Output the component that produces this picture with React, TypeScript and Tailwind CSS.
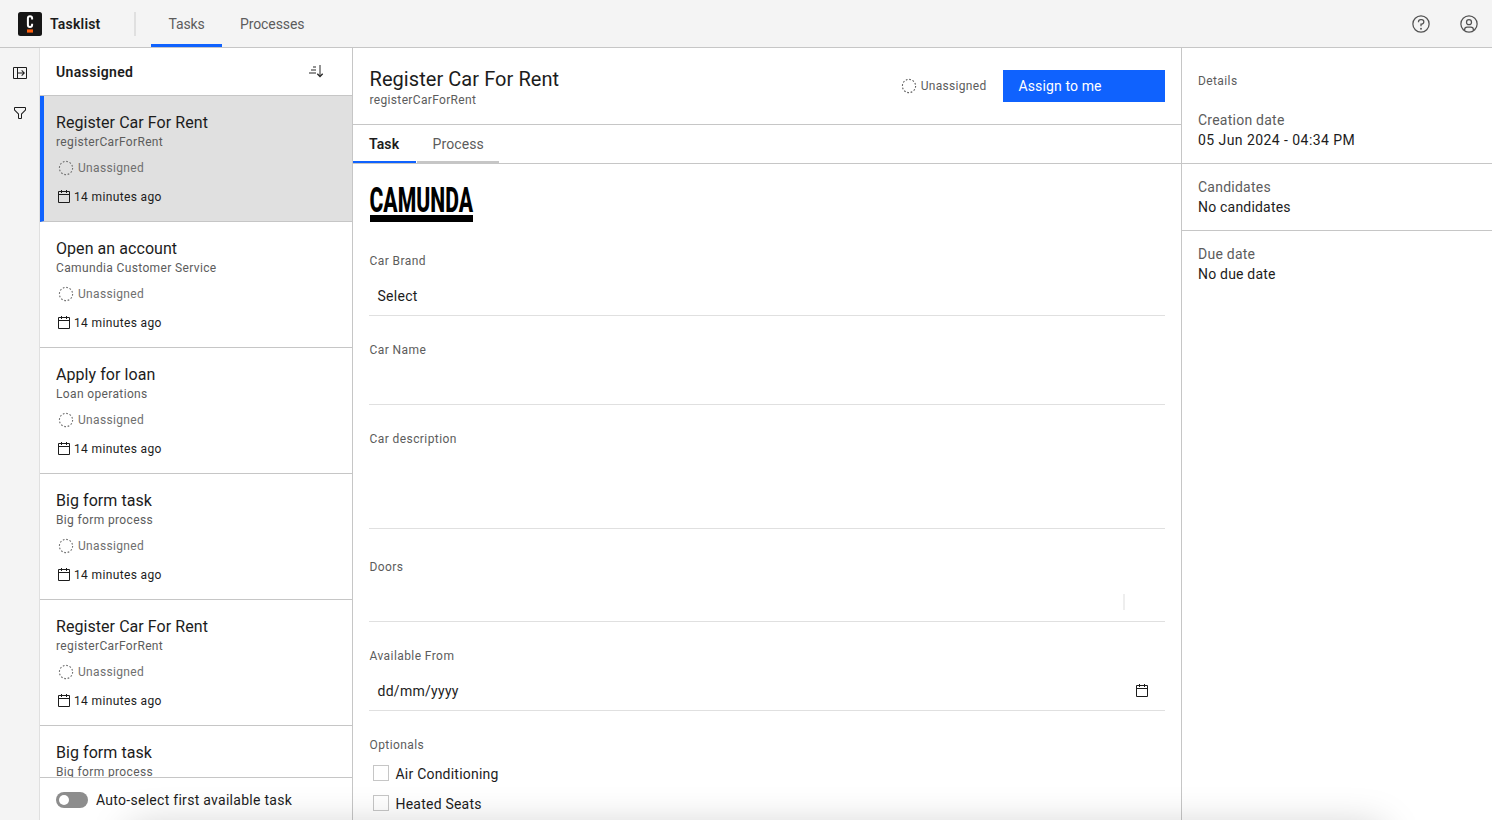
import React from "react";

const CALENDAR =
  "M26,4H22V2H20V4H12V2H10V4H6A2,2,0,0,0,4,6V26a2,2,0,0,0,2,2H26a2,2,0,0,0,2-2V6A2,2,0,0,0,26,4Zm0,22H6V12H26Zm0-16H6V6h4V8h2V6h8V8h2V6h4Z";
const FILTER =
  "M18,28H14a2,2,0,0,1-2-2V18.41L4.59,11A2,2,0,0,1,4,9.59V6A2,2,0,0,1,6,4H26a2,2,0,0,1,2,2V9.59A2,2,0,0,1,27.41,11L20,18.41V26A2,2,0,0,1,18,28ZM6,6V9.59l8,8V26h4V17.59l8-8V6Z";
const PANEL =
  "M28,4H4A2,2,0,0,0,2,6V26a2,2,0,0,0,2,2H28a2,2,0,0,0,2-2V6A2,2,0,0,0,28,4ZM4,6h6V26H4ZM28,26H12V17H22.17l-3.58,3.59L20,22l6-6-6-6-1.41,1.41L22.17,15H12V6H28Z";
const HELP =
  "M16,2A14,14,0,1,0,30,16,14,14,0,0,0,16,2Zm0,26A12,12,0,1,1,28,16,12,12,0,0,1,16,28ZM17,8H15.5A4.49,4.49,0,0,0,11,12.49V13h2v-.5A2.5,2.5,0,0,1,15.5,10H17a2.5,2.5,0,0,1,0,5H15v4.5h2V17a4.5,4.5,0,0,0,0-9Z";
const AVATAR =
  "M16,8a5,5,0,1,0,5,5A5,5,0,0,0,16,8Zm0,8a3,3,0,1,1,3-3A3,3,0,0,1,16,16ZM16,2A14,14,0,1,0,30,16,14,14,0,0,0,16,2ZM10,26.38V25a3,3,0,0,1,3-3h6a3,3,0,0,1,3,3v1.38a11.9,11.9,0,0,1-12,0Zm13.99-1.45A5,5,0,0,0,19,20H13a5,5,0,0,0-4.99,4.93,12,12,0,1,1,15.98,0Z";

function Icon({ d, className = "size-4", children }: { d: string; className?: string; children?: React.ReactNode }) {
  return (
    <svg viewBox="0 0 32 32" fill="currentColor" className={`shrink-0 ${className}`} aria-hidden="true">
      <path d={d} />
      {children}
    </svg>
  );
}

function CircleDash() {
  return (
    <svg viewBox="0 0 16 16" className="size-4 shrink-0" fill="none" stroke="currentColor" aria-hidden="true">
      <circle cx="8" cy="8" r="6.6" strokeWidth="1.1" strokeDasharray="1.728 1.728" />
    </svg>
  );
}

const tasks = [
  ["Register Car For Rent", "registerCarForRent", "14 minutes ago"],
  ["Open an account", "Camundia Customer Service", "14 minutes ago"],
  ["Apply for loan", "Loan operations", "14 minutes ago"],
  ["Big form task", "Big form process", "14 minutes ago"],
  ["Register Car For Rent", "registerCarForRent", "14 minutes ago"],
  ["Big form task", "Big form process"],
];

function TaskCard({
  name,
  process,
  created,
  selected,
}: {
  name: string;
  process: string;
  created?: string;
  selected: boolean;
}) {
  return (
    <li
      className={`h-[126px] shrink-0 border-b border-[#c6c6c6] pt-4 text-xs ${
        selected ? "border-l-4 border-l-[#0f62fe] bg-[#e0e0e0] pl-3" : "pl-4"
      }`}
    >
      <div className="text-base leading-[22px] tracking-[0.06px]">{name}</div>
      <div className="h-4 leading-4 tracking-[0.36px] text-[#5c5c5c]">{process}</div>
      {created && (
        <>
          <div className="mt-2.5 flex h-4 items-center gap-1 pl-0.5 tracking-[0.34px] text-[#6f6f6f]">
            <CircleDash />
            Unassigned
          </div>
          <div className="mt-[13px] flex h-4 items-center gap-0.5 tracking-[0.36px]">
            <Icon d={CALENDAR} />
            {created}
          </div>
        </>
      )}
    </li>
  );
}

function Field({
  label,
  spaced,
  className = "h-10",
  children,
}: {
  label: string;
  spaced?: boolean;
  className?: string;
  children?: React.ReactNode;
}) {
  return (
    <div className={`mb-[25px] ${spaced ? "pt-[5px]" : "pt-px"}`}>
      <div className="h-4 pl-[0.5px] text-xs leading-4 tracking-[0.42px] text-[#5c5c5c]">{label}</div>
      <div
        className={`mt-[7px] flex items-center border-b border-[#e0e0e0] pl-[8.5px] text-sm tracking-[0.28px] ${className}`}
      >
        {children}
      </div>
    </div>
  );
}

function Option({ label }: { label: string }) {
  return (
    <div className="mb-2.5 flex h-5 items-center pl-[3.5px]">
      <span className="size-4 border border-[#c6c6c6]" />
      <span className="ml-[7px] pt-px text-sm tracking-[0.22px]">{label}</span>
    </div>
  );
}

function Detail({ label, value, last }: { label: string; value: React.ReactNode; last?: boolean }) {
  return (
    <div className={`px-4 pt-[13px] text-sm leading-5 ${last ? "" : "h-[67px] border-b border-[#c6c6c6]"}`}>
      <div className="tracking-[0.24px] text-[#5c5c5c]">{label}</div>
      <div className="tracking-[0.2px]">{value}</div>
    </div>
  );
}

export default function App() {
  return (
    <div className="relative flex h-[820px] w-[1492px] flex-col overflow-hidden bg-white font-[Roboto,sans-serif] text-[#1c1c1c]">
      <header className="flex h-12 shrink-0 items-center border-b border-[#c6c6c6] bg-[#f4f4f4] pl-[18px] text-sm">
        <svg viewBox="0 0 24 24" className="size-6" aria-hidden="true">
          <rect width="24" height="24" rx="2.5" fill="#161616" />
          <path
            d="M14.1 7.6V6.3C14.1 4.9 13.4 4.3 12 4.3S9.9 4.9 9.9 6.3V13C9.9 14.4 10.6 15 12 15S14.1 14.4 14.1 13V11.7"
            fill="none"
            stroke="#fff"
            strokeWidth="2"
          />
          <rect x="9" y="17.4" width="6" height="3.2" fill="#fc5d0d" />
        </svg>
        <span className="ml-2 w-[84px] font-semibold tracking-[0.2px]">Tasklist</span>
        <span className="h-6 w-0.5 bg-[#e0e0e0]" />
        <nav className="ml-[14.5px] flex h-full text-[#5c5c5c]">
          <a className="flex w-[71.5px] items-center border-b-[3px] border-[#0f62fe] pt-[3px] pl-[18px] tracking-[-0.1px]">
            Tasks
          </a>
          <a className="flex items-center px-[18px] tracking-[-0.1px]">Processes</a>
        </nav>
        <div className="ml-auto flex gap-7 pr-[13px] text-[#525252]">
          <Icon d={HELP} className="size-5">
            <circle cx="16" cy="23.5" r="1.5" />
          </Icon>
          <Icon d={AVATAR} className="size-5" />
        </div>
      </header>

      <div className="flex min-h-0 flex-1">
        <aside className="flex w-10 shrink-0 flex-col items-center gap-6 border-r border-[#e0e0e0] bg-[#f4f4f4] pt-[17px]">
          <Icon d={PANEL} />
          <Icon d={FILTER} />
        </aside>

        <section className="flex w-[313px] shrink-0 flex-col border-r border-[#c6c6c6]">
          <div className="flex h-12 shrink-0 items-center justify-between border-b border-[#c6c6c6] pr-7 pl-4 text-sm">
            <h1 className="font-semibold tracking-[0.35px]">Unassigned</h1>
            <svg viewBox="0 0 16 16" className="-mt-0.5 size-4" fill="none" aria-hidden="true">
              <path d="M5 4H8M3 7H8M1 10H8" stroke="#6f6f6f" strokeWidth="1.5" />
              <path d="M12 2V13" stroke="#6f6f6f" strokeWidth="1.5" />
              <path d="M9.3 10.8L12 13.5L14.7 10.8" stroke="#262626" strokeWidth="1.3" />
            </svg>
          </div>
          <ul className="flex min-h-0 flex-1 flex-col overflow-hidden">
            {tasks.map(([name, process, created], i) => (
              <TaskCard key={i} name={name} process={process} created={created} selected={i === 0} />
            ))}
          </ul>
          <div className="flex h-[43px] shrink-0 items-center border-t border-[#c6c6c6] pt-0.5 pl-4 text-sm">
            <span className="flex h-4 w-8 items-center rounded-full bg-[#8d8d8d] pl-[3px]">
              <span className="size-2.5 rounded-full bg-white" />
            </span>
            <span className="ml-2 tracking-[0.28px]">Auto-select first available task</span>
          </div>
        </section>

        <main className="flex w-[828px] shrink-0 flex-col overflow-hidden">
          <div className="flex h-[77px] shrink-0 items-center border-b border-[#c6c6c6] px-4">
            <div className="pt-0.5 pl-[0.5px]">
              <h2 className="text-xl leading-[26px] tracking-[0.06px]">Register Car For Rent</h2>
              <div className="pt-[0.5px] text-xs leading-4 tracking-[0.34px] text-[#5c5c5c]">registerCarForRent</div>
            </div>
            <div className="ml-auto flex items-center gap-1 text-xs tracking-[0.3px] text-[#5c5c5c]">
              <CircleDash />
              Unassigned
            </div>
            <button className="ml-4 h-8 w-[162.5px] bg-[#0f62fe] pl-4 text-left text-sm tracking-[0.12px] text-white">
              Assign to me
            </button>
          </div>
          <div className="flex h-[39px] shrink-0 border-b border-[#c6c6c6] text-sm">
            <span className="flex w-[62.5px] items-center border-b-2 border-[#0f62fe] pt-0.5 pl-4 font-semibold tracking-[0.1px]">
              Task
            </span>
            <span className="ml-px flex w-[82.5px] items-center border-b-2 border-[#c6c6c6] pt-0.5 pl-4 tracking-[0.1px] text-[#5c5c5c]">
              Process
            </span>
          </div>
          <div className="flex flex-col pr-4 pl-4">
            <svg
              viewBox="0 0 105 37"
              className="mt-[22px] mb-[29px] h-[37px] w-[105px] overflow-visible"
              role="img"
              aria-label="Camunda"
            >
              <text x="0.5" y="26" textLength="103.5" lengthAdjust="spacingAndGlyphs" className="text-[35px] font-extrabold" fill="#000">
                CAMUNDA
              </text>
              <rect x="1" y="29" width="103" height="7" fill="#000" />
            </svg>
            <Field label="Car Brand">Select</Field>
            <Field label="Car Name" />
            <Field label="Car description" className="h-[75px]" />
            <Field label="Doors" spaced className="h-10 justify-end pr-10">
              <span className="h-4 w-0.5 bg-[#eeeeee]" />
            </Field>
            <Field label="Available From" className="h-10 justify-between pr-[15px]">
              dd/mm/yyyy
              <Icon d={CALENDAR} />
            </Field>
            <div className="mb-2.5 h-[17px] pt-px pl-[0.5px] text-xs leading-4 tracking-[0.42px] text-[#5c5c5c]">
              Optionals
            </div>
            <Option label="Air Conditioning" />
            <Option label="Heated Seats" />
          </div>
        </main>

        <aside className="flex-1 border-l border-[#c6c6c6]">
          <div className="h-[49px] px-4 pt-[25px] text-xs leading-4 tracking-[0.4px] text-[#5c5c5c]">Details</div>
          <Detail
            label="Creation date"
            value={<span className="tracking-[0.44px]">05 Jun 2024 - 04:34 PM</span>}
          />
          <Detail label="Candidates" value="No candidates" />
          <Detail label="Due date" value="No due date" last />
        </aside>
      </div>
      <div className="pointer-events-none absolute top-[828px] right-[110px] left-[130px] h-10 shadow-[0_0_40px_rgba(0,0,0,0.22)]" />
    </div>
  );
}
